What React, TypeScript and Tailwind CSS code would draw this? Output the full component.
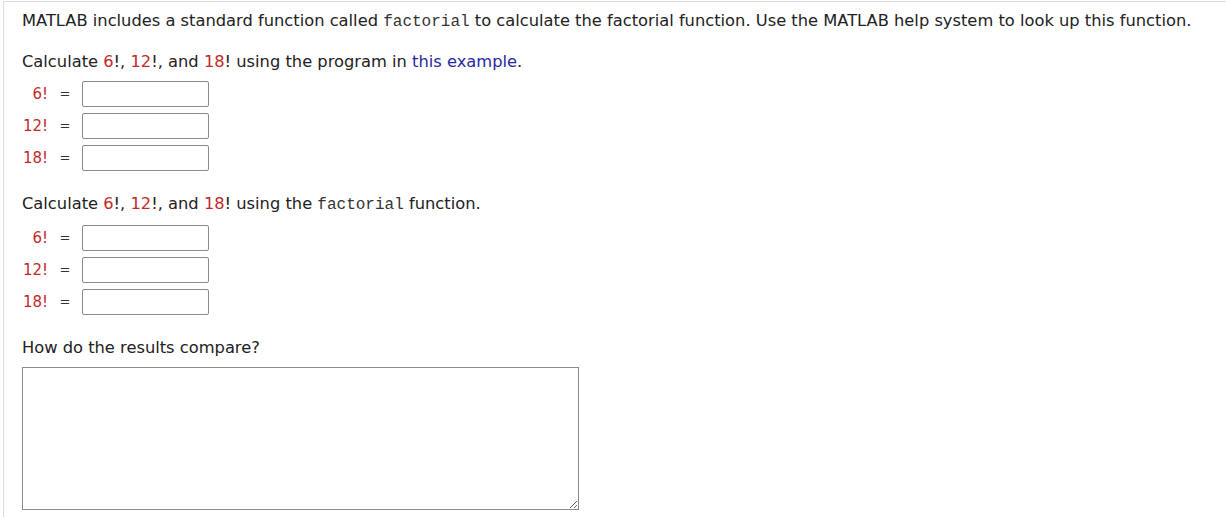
const sans = { fontFamily: '"DejaVu Sans", Verdana, sans-serif' };

function Num({ children }: { children: React.ReactNode }) {
  return <span className="text-[#c22a2a]">{children}</span>;
}

function Code({ children }: { children: React.ReactNode }) {
  return (
    <code className="font-['Liberation_Mono',monospace] text-[16px] text-[#333]">{children}</code>
  );
}

function AnswerRows() {
  const rows = ['6!', '12!', '18!'];
  return (
    <div className="flex flex-col gap-[6px]">
      {rows.map((r) => (
        <div key={r} className="flex items-center h-[26px]">
          <span className="w-[26px] text-right text-[#c22a2a] text-[15px]">{r}</span>
          <span className="w-[34px] text-center text-[#333] text-[13px]">=</span>
          <input
            type="text"
            className="w-[127px] h-[26px] border border-[#8a8a8a] rounded-[2px] bg-white outline-none px-1"
          />
        </div>
      ))}
    </div>
  );
}

export default function App() {
  return (
    <div className="w-[1226px] h-[517px] bg-white overflow-hidden" style={sans}>
      <div className="ml-[3px] mt-[1px] border-t border-l border-[#dcdcdc] h-full pl-[18px] pt-[8px] text-[16.3px] leading-[22px] text-[#222]">
        <p>
          MATLAB includes a standard function called <Code>factorial</Code> to calculate the factorial
          function. Use the MATLAB help system to look up this function.
        </p>
        <p className="mt-[18px]">
          Calculate <Num>6</Num>!, <Num>12</Num>!, and <Num>18</Num>! using the program in{' '}
          <a className="text-[#2a2a9c]">this example</a>.
        </p>
        <div className="mt-[8px]">
          <AnswerRows />
        </div>
        <p className="mt-[22px]">
          Calculate <Num>6</Num>!, <Num>12</Num>!, and <Num>18</Num>! using the <Code>factorial</Code> function.
        </p>
        <div className="mt-[9px]">
          <AnswerRows />
        </div>
        <p className="mt-[22px]">How do the results compare?</p>
        <textarea className="mt-[8px] block w-[557px] h-[143px] border border-[#8a8a8a] bg-white outline-none resize" />
      </div>
    </div>
  );
}
